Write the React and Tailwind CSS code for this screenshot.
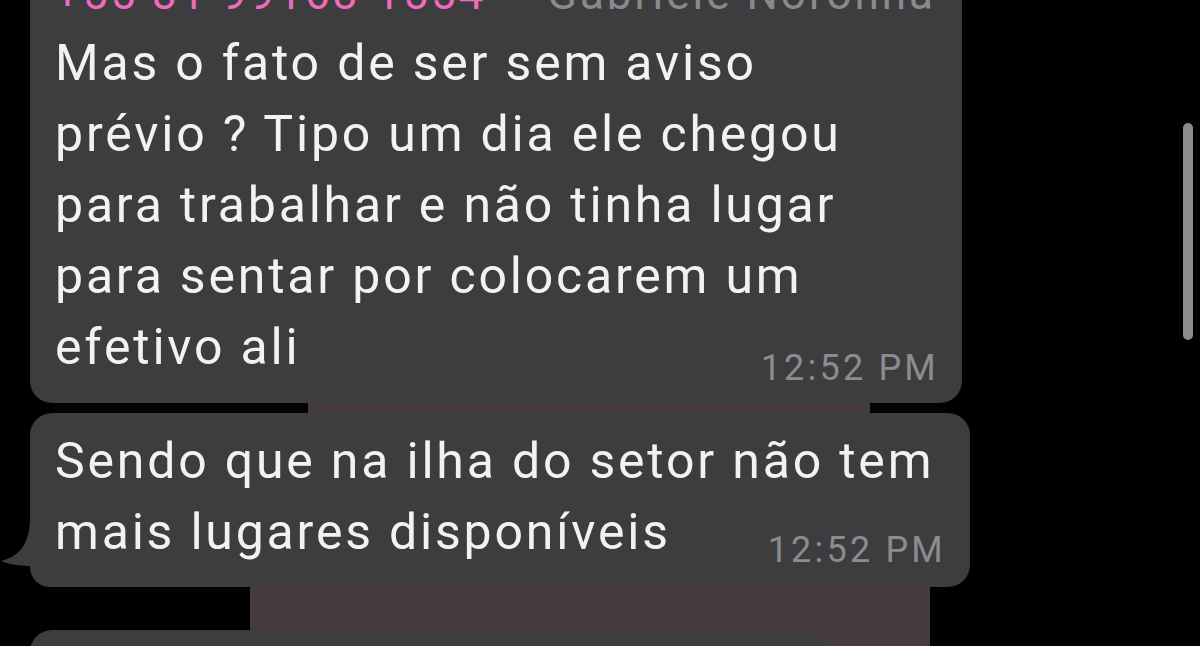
import React from "react";

const bubbleText = "font-['Roboto','Liberation_Sans',sans-serif] text-[50px] leading-[71px] tracking-[2.8px] text-[#f2f2f2] whitespace-nowrap";
const timeText = "font-['Roboto','Liberation_Sans',sans-serif] text-[36px] leading-[40px] tracking-[3.2px] text-[#8c8c8e] whitespace-nowrap";

const Bubble = ({ lines, time, className, timeOffset, children }) => (
    <div className={`relative bg-[#3d3d3f] ${className}`}>
        {children}
        {lines.slice(0, -1).map((line, i) => (
            <div key={i} className={bubbleText}>{line}</div>
        ))}
        <div className="flex items-end justify-between">
            <span className={bubbleText}>{lines[lines.length - 1]}</span>
            <span className={`${timeText} ${timeOffset}`}>{time}</span>
        </div>
    </div>
);

const App = () => {
    return (
        <div className="relative h-[646px] w-[1200px] overflow-hidden bg-black">
            {/* wallpaper peeking between bubbles */}
            <div className="absolute left-[308px] top-[398px] h-[20px] w-[562px] bg-[#443a40]" />
            <div className="absolute left-[250px] top-[580px] h-[66px] w-[680px] bg-[#443a40]" />

            <div className="relative flex flex-col pl-[30px]">
                <Bubble
                    className="mt-[-40px] w-[932px] rounded-b-[22px] pl-[25px] pr-[26px] pt-[10px] pb-[20px]"
                    lines={[
                        "Mas o fato de ser sem aviso",
                        "prévio ? Tipo um dia ele chegou",
                        "para trabalhar e não tinha lugar",
                        "para sentar por colocarem um",
                        "efetivo ali",
                    ]}
                    time="12:52 PM"
                    timeOffset="mb-[-5px] mr-[-3px]"
                >
                    <div className="mb-[10px] flex justify-between font-['Roboto','Liberation_Sans',sans-serif] text-[44px] leading-[48px] tracking-[3px]">
                        <span className="text-[#f06bb9]">+55 31 99168-1554</span>
                        <span className="text-[#8a8a8c]">Gabriele Noronha</span>
                    </div>
                </Bubble>

                <Bubble
                    className="mt-[10px] w-[940px] rounded-[22px] rounded-bl-[20px] pl-[25px] pr-[27px] pt-[13px] pb-[19px]"
                    lines={["Sendo que na ilha do setor não tem", "mais lugares disponíveis"]}
                    time="12:52 PM"
                    timeOffset="mb-[-2px] mr-[-3px]"
                >
                    <svg className="absolute bottom-[19px] left-[-30px]" width="34" height="50" viewBox="0 0 34 50">
                        <path d="M34 0 L30 0 C30 22 22 38 1 43 C10 47 22 48 34 48 Z" fill="#3d3d3f" />
                    </svg>
                </Bubble>

                <div className="mt-[43px] h-[60px] w-[795px] rounded-t-[22px] bg-[#3d3d3f]" />
            </div>

            {/* scrollbar */}
            <div className="absolute right-[7px] top-[123px] h-[217px] w-[10px] rounded-full bg-[#8b8b8b]" />
        </div>
    );
};

export default App;
